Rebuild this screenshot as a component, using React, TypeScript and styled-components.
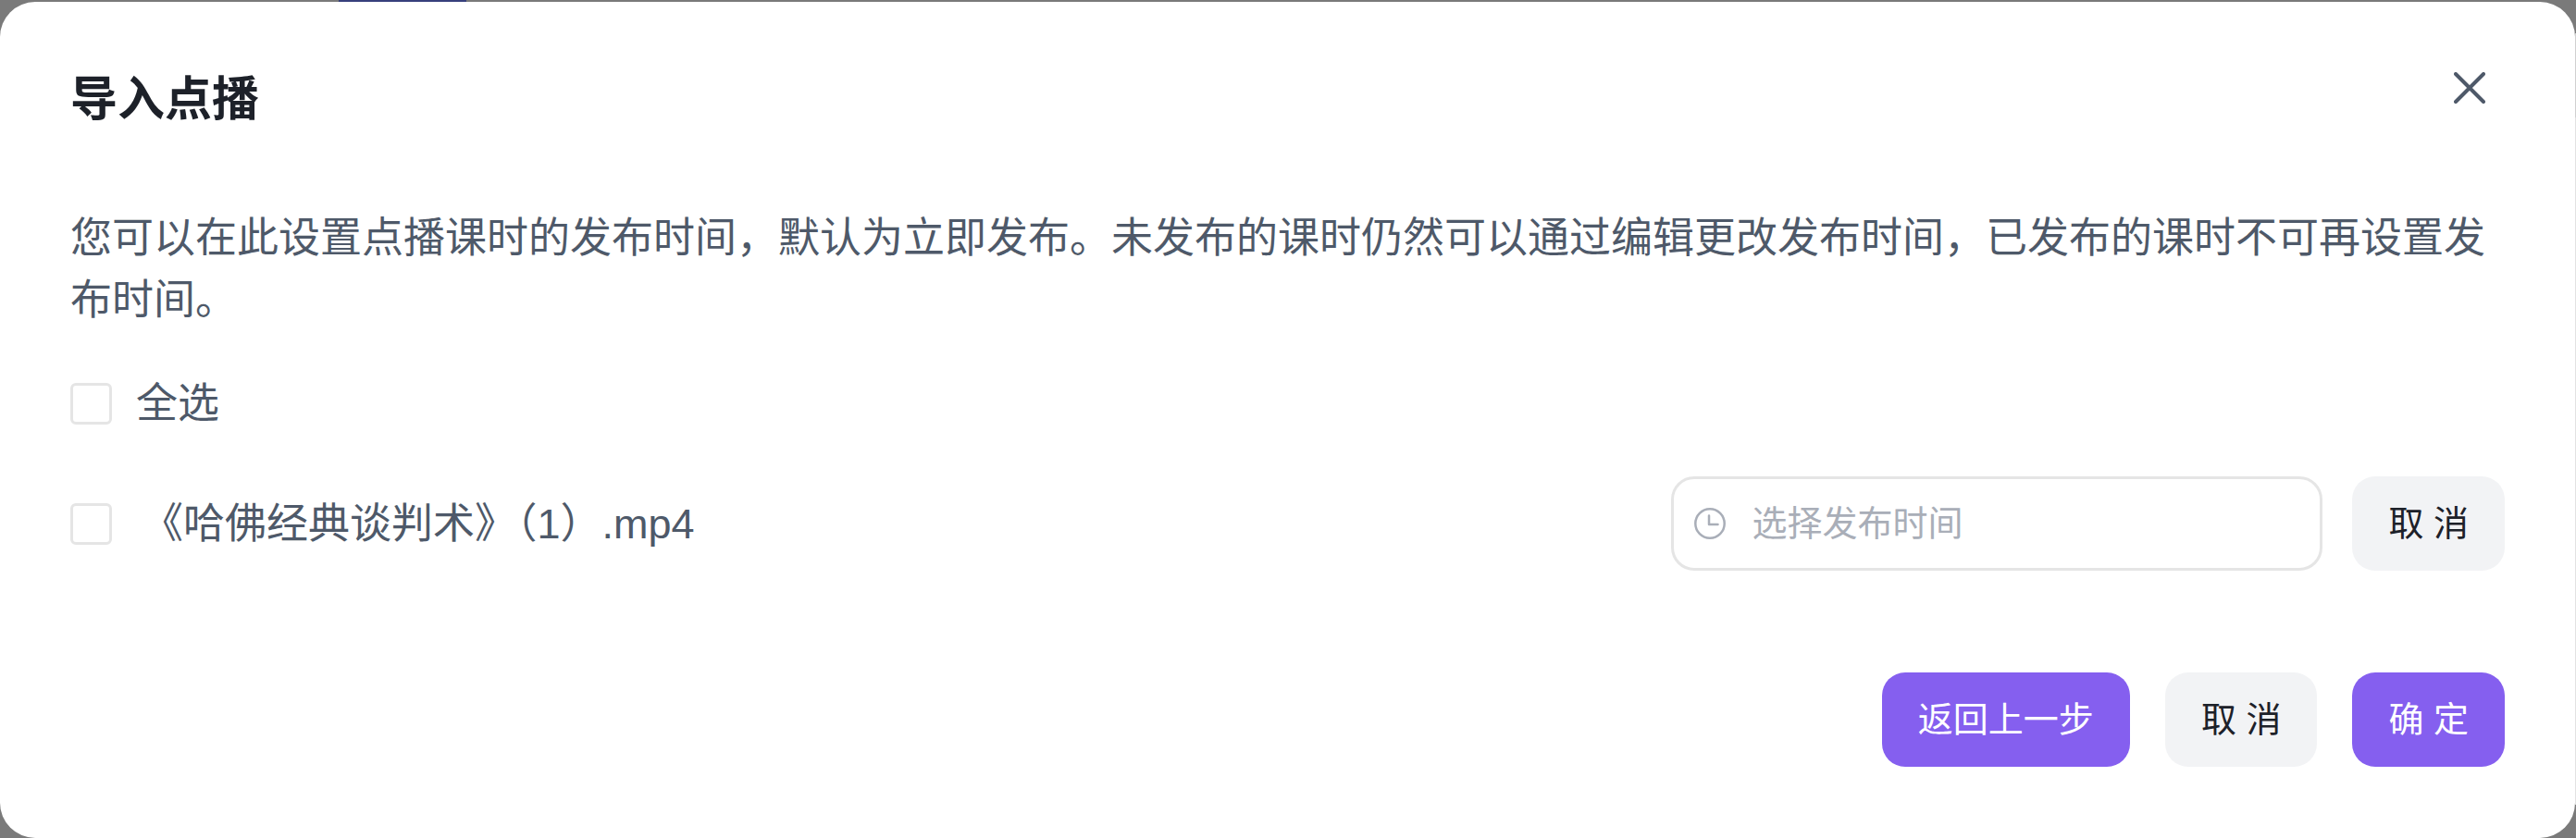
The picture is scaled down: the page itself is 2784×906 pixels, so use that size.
import React, { useState } from "react";
import styled, { createGlobalStyle } from "styled-components";

const GlobalStyle = createGlobalStyle`
  *, *::before, *::after { box-sizing: border-box; }
  body {
    margin: 0;
    background: #7a7a7a;
    font-family: "Liberation Sans", "Noto Sans CJK SC", sans-serif;
    color: #4e5969;
  }
  button, input { font-family: inherit; }
`;

/* The dimmed page shows as a thin strip above and to the right of the dialog. */
const Backdrop = styled.div`
  min-height: 100vh;
  padding: 2px 1px 0 0;
  background:
    linear-gradient(90deg, #7a7a7a 366px, #37407c 366px, #37407c 504px, #7a7a7a 504px) top / 100% 2px no-repeat,
    linear-gradient(#7a7a7a 36px, #d0d0d0 36px, #d0d0d0 127px, #e2e2e2 127px, #e2e2e2 calc(100% - 36px), #7a7a7a calc(100% - 36px)) right / 1px 100% no-repeat,
    #7a7a7a;
`;

const Dialog = styled.section`
  display: flex;
  flex-direction: column;
  padding: 64px 76px 77px;
  border-radius: 38px;
  background: #fff;
`;

const Header = styled.header`
  display: flex;
  justify-content: space-between;
  align-items: flex-start;
`;

const Title = styled.h2`
  margin: 0;
  font-size: 51px;
  line-height: 84px;
  font-weight: 700;
  color: #1d2129;
`;

const CloseButton = styled.button`
  display: flex;
  align-items: center;
  justify-content: center;
  width: 76px;
  height: 58px;
  padding: 0;
  border: 0;
  background: none;
  color: #4e5969;
  cursor: pointer;
`;

const Body = styled.div`
  display: flex;
  flex-direction: column;
  padding-top: 74px;
  font-size: 45px;
`;

const Hint = styled.p`
  margin: 0;
  line-height: 67px;
`;

const Row = styled.div`
  display: flex;
  align-items: center;
  gap: 32px;
  min-height: 69px;
  margin-top: 44px;
`;

const CheckLabel = styled.label<{ $gap: number }>`
  display: flex;
  align-items: center;
  gap: ${(p) => p.$gap}px;
  flex: 1;
  line-height: 69px;
  cursor: pointer;
`;

const Checkbox = styled.input`
  appearance: none;
  flex: none;
  width: 45px;
  height: 45px;
  margin: 0;
  border: 3px solid #e5e5e5;
  border-radius: 6px;
  background: #fff;
  cursor: pointer;
  &:checked {
    border-color: #855fef;
    background: #855fef;
  }
`;

const DateField = styled.label`
  display: flex;
  align-items: center;
  gap: 28px;
  width: 704px;
  height: 102px;
  padding: 0 22px;
  border: 3px solid #e5e5e5;
  border-radius: 25px;
  color: #a9aeb8;
`;

const DateInput = styled.input`
  flex: 1;
  min-width: 0;
  height: 60px;
  padding: 0;
  border: 0;
  outline: 0;
  background: none;
  font-size: 38px;
  color: #1d2129;
  &::placeholder { color: #a9aeb8; opacity: 1; }
`;

const Button = styled.button<{ $primary?: boolean }>`
  flex: none;
  height: 102px;
  padding: 0 39px;
  border: 0;
  border-radius: 25px;
  font-size: 38px;
  line-height: 58px;
  background: ${(p) => (p.$primary ? "#855fef" : "#f2f3f5")};
  color: ${(p) => (p.$primary ? "#fff" : "#1d2129")};
  cursor: pointer;
`;

const Footer = styled.footer`
  display: flex;
  justify-content: flex-end;
  gap: 38px;
  padding-top: 110px;
`;

const CloseIcon = () => (
  <svg width="34" height="34" viewBox="0 0 34 34" fill="none" stroke="currentColor" strokeWidth="4" strokeLinecap="round" aria-hidden="true">
    <path d="M2 2L32 32M32 2L2 32" />
  </svg>
);

const ClockIcon = () => (
  <svg width="34" height="34" viewBox="0 0 34 34" fill="none" stroke="currentColor" strokeWidth="2.5" aria-hidden="true">
    <circle cx="17" cy="17" r="15.7" />
    <path d="M16 8.5V18H25.5" strokeLinecap="round" strokeLinejoin="round" />
  </svg>
);

const lessons = ["《哈佛经典谈判术》（1）.mp4"];

export default function App() {
  const [selected, setSelected] = useState<string[]>([]);
  const allSelected = selected.length === lessons.length;

  const toggle = (name: string) =>
    setSelected((s) => (s.includes(name) ? s.filter((n) => n !== name) : [...s, name]));

  return (
    <>
      <GlobalStyle />
      <Backdrop>
        <Dialog role="dialog" aria-labelledby="dialog-title">
          <Header>
            <Title id="dialog-title">导入点播</Title>
            <CloseButton type="button" aria-label="关闭">
              <CloseIcon />
            </CloseButton>
          </Header>
          <Body>
            <Hint>
              您可以在此设置点播课时的发布时间，默认为立即发布。未发布的课时仍然可以通过编辑更改发布时间，已发布的课时不可再设置发布时间。
            </Hint>
            <Row>
              <CheckLabel $gap={26}>
                <Checkbox type="checkbox" checked={allSelected} onChange={() => setSelected(allSelected ? [] : lessons)} />
                全选
              </CheckLabel>
            </Row>
            {lessons.map((name) => (
              <Row key={name}>
                <CheckLabel $gap={32}>
                  <Checkbox type="checkbox" checked={selected.includes(name)} onChange={() => toggle(name)} />
                  {name}
                </CheckLabel>
                <DateField>
                  <ClockIcon />
                  <DateInput type="text" placeholder="选择发布时间" aria-label="选择发布时间" />
                </DateField>
                <Button type="button">取 消</Button>
              </Row>
            ))}
          </Body>
          <Footer>
            <Button type="button" $primary>返回上一步</Button>
            <Button type="button">取 消</Button>
            <Button type="button" $primary>确 定</Button>
          </Footer>
        </Dialog>
      </Backdrop>
    </>
  );
}
